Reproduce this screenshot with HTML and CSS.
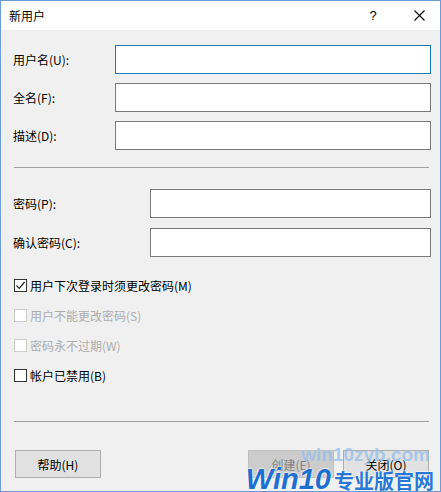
FILE: index.html
```html
<!DOCTYPE html>
<html lang="zh-CN">
<head>
<meta charset="UTF-8" />
<title>新用户</title>
<link rel="stylesheet" href="styles.css">
</head>
<body>
<div class="dialog">
    <div class="titlebar">
        <span class="title">新用户</span>
        <span class="help-btn">?</span>
        <span class="close-btn">
            <svg width="11" height="11" viewBox="0 0 11 11"><path d="M0.5 0.5L10.5 10.5M10.5 0.5L0.5 10.5" stroke="#000" stroke-width="1.1" fill="none"/></svg>
        </span>
    </div>

    <div class="content">
        <div class="fields">
            <label>用户名(U):</label><input type="text" class="field focused">
            <label>全名(F):</label><input type="text" class="field">
            <label>描述(D):</label><input type="text" class="field">
        </div>

        <div class="sep"></div>

        <div class="fields pw">
            <label>密码(P):</label><input type="password" class="field">
            <label>确认密码(C):</label><input type="password" class="field">
        </div>

        <div class="checks">
            <div class="check"><span class="box checked"><svg width="11" height="11" viewBox="0 0 11 11"><path d="M1.5 5.5L4.2 8.3L9.6 2" stroke="#222" stroke-width="1.2" fill="none"/></svg></span>用户下次登录时须更改密码(M)</div>
            <div class="check disabled"><span class="box"></span>用户不能更改密码(S)</div>
            <div class="check disabled"><span class="box"></span>密码永不过期(W)</div>
            <div class="check"><span class="box"></span>帐户已禁用(B)</div>
        </div>

        <div class="sep bottom"></div>

        <div class="buttons">
            <button class="btn">帮助(H)</button>
            <span class="spacer"></span>
            <button class="btn" disabled>创建(E)</button>
            <button class="btn">关闭(O)</button>
        </div>
    </div>

    <!-- 截图右下角的水印 -->
    <div class="watermark">
        <div class="wm-url">win10zyb.com</div>
        <div class="wm-name"><span class="wm-win">Win10</span><span class="wm-cn">专业版官网</span></div>
    </div>
</div>
</body>
</html>
```

FILE: styles.css
```css
*{margin:0;padding:0;box-sizing:border-box}
body{
    font-family:"Noto Sans CJK SC","Liberation Sans",sans-serif;
    font-size:12px;
    color:#000;
    background:#f0f0f0;
}
.dialog{
    position:relative;
    width:441px;
    height:492px;
    border:1px solid #6a9ad8;
    background:#f0f0f0;
    overflow:hidden;
}
.titlebar{
    height:29px;
    background:#fff;
    display:flex;
    align-items:center;
    padding-left:8px;
}
.title{
    flex:1;
    font-size:12px;
    line-height:14px;
}
.help-btn{
    width:46px;
    text-align:center;
    font-family:"Liberation Sans",sans-serif;
    font-size:13px;
    padding-left:4px;
}
.close-btn{
    width:46px;
    display:flex;
    justify-content:center;
    padding-left:4px;
}
.content{
    padding:15px 9px 0 12px;
}
.fields{
    display:grid;
    grid-template-columns:102px 1fr;
    row-gap:9px;
    align-items:center;
}
.fields.pw{
    grid-template-columns:137px 1fr;
    row-gap:10px;
}
.fields label{
    line-height:14px;
}
.field{
    height:29px;
    border:1px solid #7a7a7a;
    background:#fff;
    outline:none;
    font:inherit;
}
.field.focused{
    border-color:#1c7cb7;
}
.sep{
    height:1px;
    background:#a0a0a0;
    margin:17px 2px 21px 1px;
}
.sep.bottom{
    margin:39px 2px 28px 1px;
}
.checks{
    margin-top:22px;
    display:flex;
    flex-direction:column;
    gap:17px;
    padding-left:1px;
}
.check{
    height:13px;
    display:flex;
    align-items:center;
    gap:3px;
    line-height:13px;
    white-space:nowrap;
}
.box{
    width:13px;
    height:13px;
    border:1px solid #333;
    background:#fff;
    display:flex;
    align-items:center;
    justify-content:center;
}
.check.disabled{
    color:#adadad;
}
.check.disabled .box{
    border-color:#cccccc;
}
.buttons{
    display:flex;
    gap:9px;
    padding-left:2px;
    padding-right:2px;
}
.spacer{
    flex:1;
}
.btn{
    width:86px;
    height:28px;
    border:1px solid #adadad;
    background:#e1e1e1;
    font:inherit;
    color:#000;
}
.btn:disabled{
    background:#cccccc;
    border-color:#bfbfbf;
    color:#838383;
}
.watermark{
    position:absolute;
    right:6px;
    bottom:-3px;
    text-align:right;
    pointer-events:none;
}
.wm-url{
    font-family:"Liberation Sans",sans-serif;
    font-weight:bold;
    font-size:19px;
    line-height:18px;
    color:rgba(150,190,235,0.75);
    margin-right:4px;
}
.wm-name{
    display:flex;
    align-items:baseline;
    gap:3px;
}
.wm-win{
    font-family:"Liberation Sans",sans-serif;
    font-style:italic;
    font-weight:bold;
    font-size:29px;
    line-height:30px;
    color:#1f6fd0;
    text-shadow:0 0 2px #fff,0 0 2px #fff;
}
.wm-cn{
    font-weight:bold;
    font-size:20px;
    line-height:26px;
    color:#2a78d6;
    text-shadow:0 0 2px #fff,0 0 2px #fff;
}
```
